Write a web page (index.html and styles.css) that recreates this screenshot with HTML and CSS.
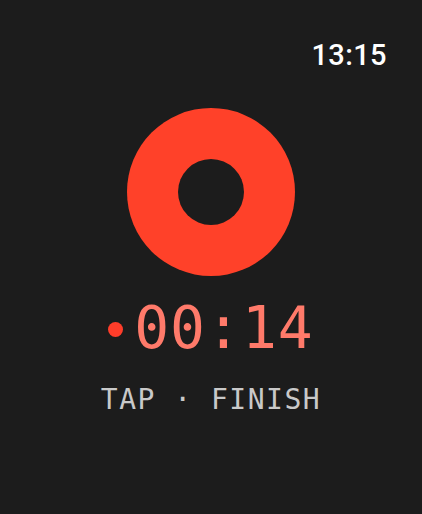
FILE: index.html
```html
<!DOCTYPE html>
<html>
<head>
<meta charset="utf-8">
<link rel="stylesheet" href="styles.css">
</head>
<body>
<div class="screen">
  <div class="status"><span class="clock">13:15</span></div>
  <div class="record" aria-label="Recording">
    <div class="hole"></div>
  </div>
  <div class="timer"><span class="dot"></span><span class="time">00:14</span></div>
  <div class="hint">TAP · FINISH</div>
</div>
</body>
</html>
```
FILE: styles.css
```css
html, body {
  margin: 0;
  padding: 0;
  background: #1c1c1c;
}
.screen {
  width: 422px;
  height: 514px;
  display: flex;
  flex-direction: column;
  align-items: center;
  box-sizing: border-box;
  padding-top: 38px;
}
.status {
  align-self: stretch;
  display: flex;
  justify-content: flex-end;
  padding-right: 35px;
  height: 34px;
}
.clock {
  font-family: Roboto, "Liberation Sans", Arial, sans-serif;
  font-weight: 500;
  font-size: 29px;
  line-height: 34px;
  color: #ffffff;
  letter-spacing: 0.4px;
}
.record {
  margin-top: 36px;
  width: 168px;
  height: 168px;
  border-radius: 50%;
  background: #ff4129;
  display: flex;
  align-items: center;
  justify-content: center;
}
.hole {
  width: 66px;
  height: 66px;
  border-radius: 50%;
  background: #1c1c1c;
}
.timer {
  margin-top: 22px;
  display: flex;
  align-items: center;
  height: 60px;
}
.dot {
  width: 15px;
  height: 15px;
  border-radius: 50%;
  background: #ff3d2a;
  margin-right: 11px;
  margin-top: 2px;
}
.time {
  font-family: "DejaVu Sans Mono", "Liberation Mono", monospace;
  font-size: 58px;
  line-height: 60px;
  color: #ff7a6a;
  letter-spacing: 1px;
}
.hint {
  margin-top: 25px;
  font-family: "DejaVu Sans Mono", "Liberation Mono", monospace;
  font-size: 28px;
  line-height: 34px;
  color: #c9c9c9;
  letter-spacing: 1.5px;
}
```
